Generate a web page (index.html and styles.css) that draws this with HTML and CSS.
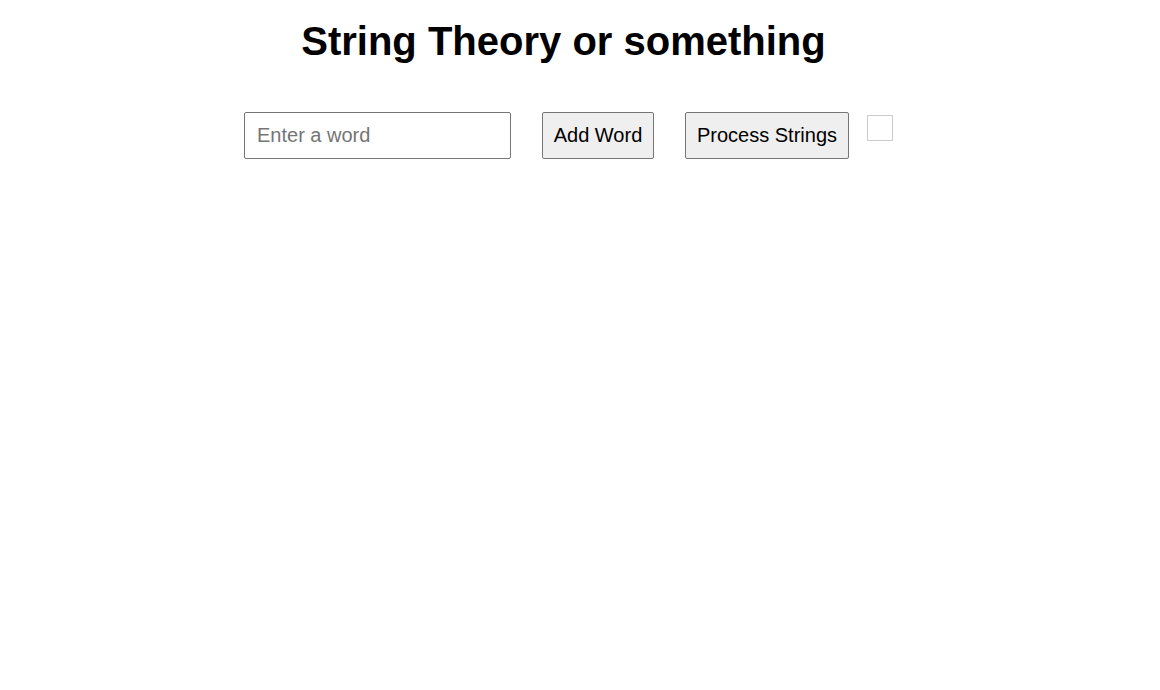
FILE: index.html
```html
<!DOCTYPE html>
<html lang="en">
<head>
  <meta charset="UTF-8">
  <title>String Theory or something</title>
  <link rel="stylesheet" href="styles.css">
</head>
<body>
  <div class="app">
    <h1 class="title">String Theory or something</h1>
    <div class="controls">
      <input type="text" class="word-input" placeholder="Enter a word">
      <button class="btn btn-add">Add Word</button>
      <button class="btn btn-process">Process Strings</button>
      <div class="output"></div>
    </div>
  </div>
</body>
</html>
```

FILE: styles.css
```css
body {
  margin: 0;
  background: #fff;
  font-family: "Liberation Sans", Arial, sans-serif;
  color: #000;
}

.app {
  width: 650px;
  margin-left: 244px;
  padding-top: 19px;
}

.title {
  margin: 0 11px 0 0;
  text-align: center;
  font-size: 40px;
  font-weight: bold;
}

.controls {
  display: flex;
  align-items: flex-start;
  margin-top: 48px;
}

.word-input {
  box-sizing: border-box;
  width: 267px;
  height: 47px;
  padding: 0 12px;
  border: 1px solid #767676;
  border-radius: 2px;
  font-family: inherit;
  font-size: 20px;
  color: #000;
}

.word-input::placeholder {
  color: #757575;
}

.btn {
  box-sizing: border-box;
  height: 47px;
  margin-left: 31px;
  padding: 0;
  background: #efefef;
  border: 1px solid #767676;
  border-radius: 2px;
  font-family: inherit;
  font-size: 20px;
  color: #000;
}

.btn-add {
  width: 112px;
}

.btn-process {
  width: 164px;
}

.output {
  width: 26px;
  height: 26px;
  margin: 3px 0 0 18px;
  box-sizing: border-box;
  border: 1px solid #ccc;
}
```
